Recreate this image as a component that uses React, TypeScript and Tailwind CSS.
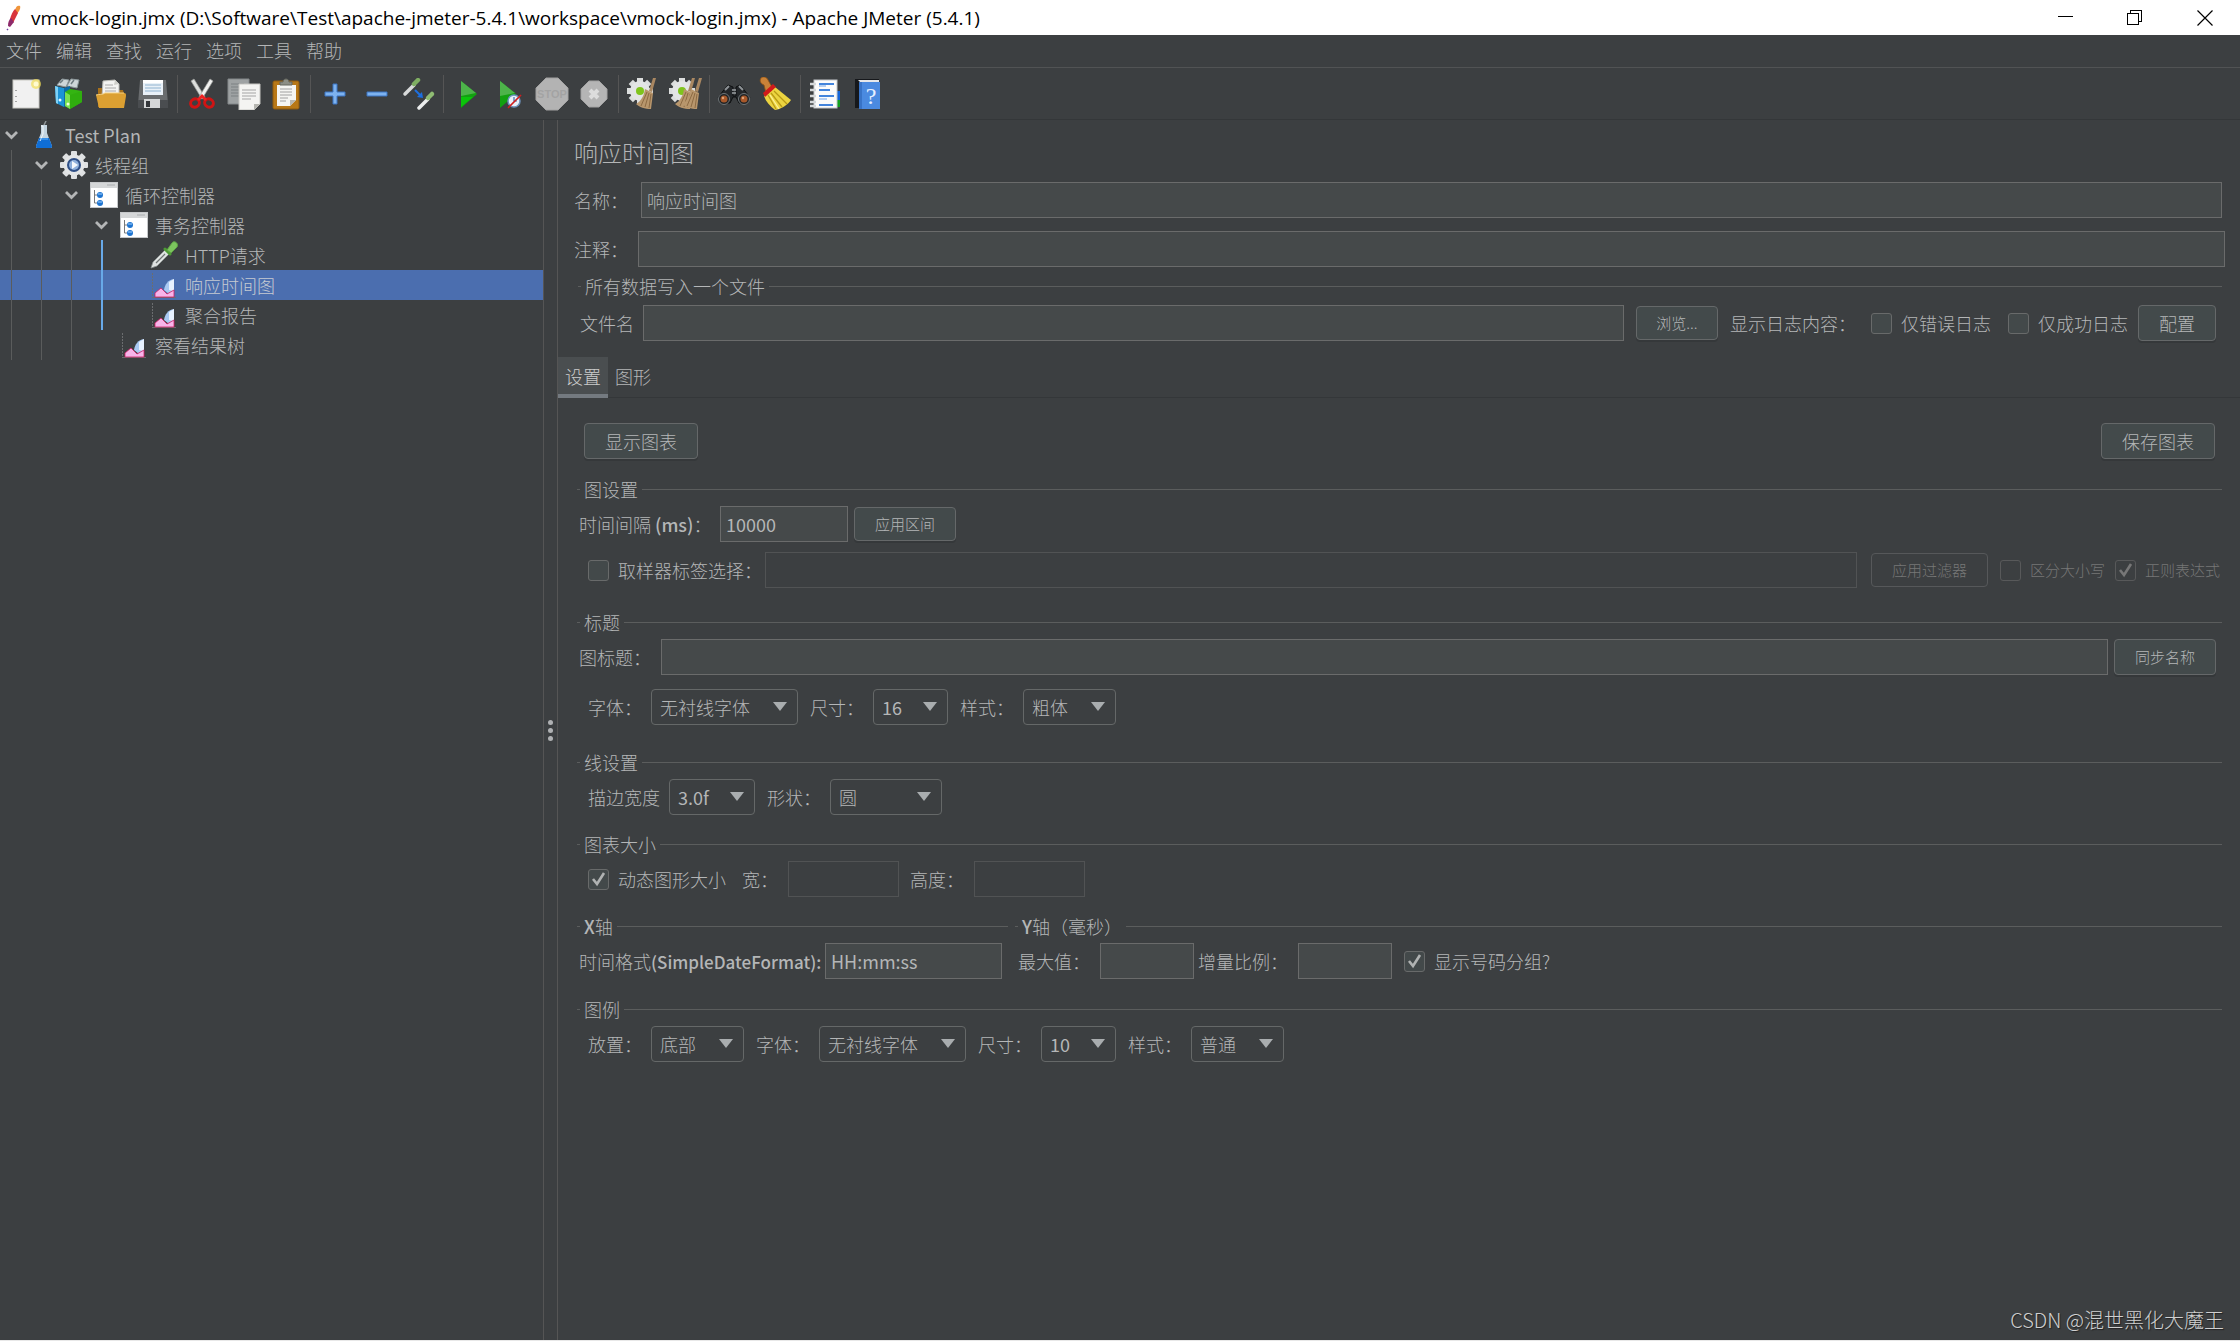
import { useState } from 'react';
import type { ReactNode } from 'react';

// ---------- toolbar icons ----------

const GEAR_TEETH = [0, 45, 90, 135, 180, 225, 270, 315];

function NewIcon() {
    return (
        <svg width="32" height="32" viewBox="0 0 32 32">
            <rect x="2" y="2" width="26" height="28" fill="#f1f1f1" stroke="#c9c9c4" />
            <path d="M5 12v1M5 18v1M5 23v1" stroke="#888" strokeWidth="1.5" />
            <circle cx="25" cy="6" r="5" fill="#f2de59" opacity=".7" />
            <circle cx="25" cy="6" r="2.5" fill="#fffbd0" />
        </svg>
    );
}

function TemplatesIcon() {
    return (
        <svg width="32" height="32" viewBox="0 0 32 32">
            <path d="M4 7l5-6 7 1-3 7zM14 8l4-7 8 1-2 8z" fill="#cfd6d8" stroke="#8e999c" />
            <path d="M7 5l3-3M18 6l3-4" stroke="#6f7b80" strokeWidth="1.5" />
            <path d="M2 8l9 2v19l-8-4z" fill="#1c93d6" />
            <path d="M2 8l3 1v17l-2-1z" fill="#7fd2f7" />
            <path d="M11 10l6-2v19l-6 2z" fill="#0d6aa6" />
            <circle cx="7" cy="22" r="1.5" fill="#e8f7ff" />
            <path d="M12 14l5-3 12 2v11l-12 7-5-3z" fill="#34b512" />
            <path d="M12 14l5 3v14l-5-3z" fill="#7be04f" />
            <path d="M17 17l12-4v11l-12 7z" fill="#2fae0e" />
            <circle cx="15" cy="26" r="1.5" fill="#eaffdf" />
        </svg>
    );
}

function OpenIcon() {
    return (
        <svg width="32" height="32" viewBox="0 0 32 32">
            <path d="M3 10h6l2 2h17l1 4v13H3z" fill="#a8711c" />
            <path d="M8 3l12-1 4 4v13H7z" fill="#f3f3f1" stroke="#bdbdb8" />
            <path d="M20 2l-1 5 5-1z" fill="#cfcfca" />
            <path d="M10 7h8M10 10h11M10 13h11" stroke="#aaa" />
            <path d="M1 17c3-1 7 0 9-2h19c2 0 2 1 2 3l-2 12H4z" fill="#dca032" />
            <path d="M1 17c3-1 7 0 9-2h19" stroke="#f4cf7c" fill="none" />
        </svg>
    );
}

function SaveIcon() {
    return (
        <svg width="32" height="32" viewBox="0 0 32 32">
            <path d="M3 2h26l2 24v4H1v-4z" fill="#696c6e" />
            <path d="M1 22h30v8H1z" fill="#4a4d50" />
            <rect x="6" y="2" width="20" height="15" fill="#e9f1f8" />
            <rect x="6" y="2" width="20" height="3" fill="#fff" />
            <path d="M8 7h16M8 10h16M8 13h16" stroke="#8fb2cf" />
            <rect x="7" y="21" width="16" height="9" fill="#d5d7d8" />
            <rect x="9" y="23" width="4" height="6" fill="#33363a" />
        </svg>
    );
}

function CutIcon() {
    return (
        <svg width="32" height="32" viewBox="0 0 32 32">
            <path d="M5 3l3-2 11 18-3 2z" fill="#dcdedc" stroke="#9a9c9a" strokeWidth=".7" />
            <path d="M27 3l-3-2-11 18 3 2z" fill="#f1f1f0" stroke="#9a9c9a" strokeWidth=".7" />
            <ellipse cx="9" cy="25" rx="4.5" ry="4" fill="none" stroke="#cf1414" strokeWidth="3" transform="rotate(-30 9 25)" />
            <ellipse cx="23" cy="25" rx="4.5" ry="4" fill="none" stroke="#cf1414" strokeWidth="3" transform="rotate(30 23 25)" />
            <path d="M12 22l4-4 4 4" fill="none" stroke="#e22" strokeWidth="3" />
        </svg>
    );
}

function CopyIcon() {
    return (
        <svg width="34" height="32" viewBox="0 0 34 32">
            <path d="M1 1h21v25H1z" fill="#9ea2a3" stroke="#83888a" />
            <path d="M4 6h13M4 9h13M4 12h8M4 15h8M4 18h8" stroke="#7c8183" />
            <path d="M12 6h21v20l-6 6H12z" fill="#f4f4f2" stroke="#c6c6c2" />
            <path d="M15 12h14M15 15h14M15 18h14M15 21h9" stroke="#a4a4a4" />
            <path d="M33 26h-6v6z" fill="#b5b5b0" />
        </svg>
    );
}

function PasteIcon() {
    return (
        <svg width="32" height="32" viewBox="0 0 32 32">
            <rect x="3" y="3" width="26" height="28" rx="1.5" fill="#b87817" stroke="#8f5a0c" />
            <path d="M7 7h19v15l-6 6H7z" fill="#f5f5f2" />
            <path d="M10 11h12M10 14h12M10 17h12M10 20h8M10 23h6" stroke="#a0a0a0" />
            <path d="M26 22h-6v6z" fill="#b7b7b2" />
            <path d="M10 7V4h3c0-4 6-4 6 0h3v3z" fill="#8d8f86" stroke="#666860" />
        </svg>
    );
}

function PlusIcon() {
    return (
        <svg width="32" height="32" viewBox="0 0 32 32">
            <path d="M14 6h4v8h8v4h-8v8h-4v-8H6v-4h8z" fill="#7db2ef" stroke="#3b74c4" />
        </svg>
    );
}

function MinusIcon() {
    return (
        <svg width="32" height="32" viewBox="0 0 32 32">
            <path d="M6 14h20v4H6z" fill="#7db2ef" stroke="#3b74c4" />
        </svg>
    );
}

function ToggleIcon() {
    return (
        <svg width="34" height="32" viewBox="0 0 34 32">
            <path d="M3 16l9-9" stroke="#d8dada" strokeWidth="3.5" strokeLinecap="round" />
            <path d="M12 6l4-4" stroke="#7fae62" strokeWidth="4.5" strokeLinecap="round" />
            <path d="M17 30l9-9" stroke="#eceeee" strokeWidth="3.5" strokeLinecap="round" />
            <path d="M26 20l4-4" stroke="#8fbc72" strokeWidth="4.5" strokeLinecap="round" />
            <path d="M13 12l6 6" stroke="#1d6fe0" strokeWidth="2" />
            <path d="M21 20l-6-1 5-5z" fill="#1d6fe0" />
        </svg>
    );
}

function PlayIcon() {
    return (
        <svg width="32" height="32" viewBox="0 0 32 32">
            <path d="M9 3l16 13L9 30z" fill="#12a010" />
            <path d="M9 3l15 12-15 3z" fill="#4db34a" />
            <path d="M9 19l12 0-12 10z" fill="#0bc40a" />
        </svg>
    );
}

function PlayNoPauseIcon() {
    return (
        <svg width="32" height="32" viewBox="0 0 32 32">
            <path d="M6 3l16 13L6 30z" fill="#12a010" />
            <path d="M6 3l15 12-15 3z" fill="#4db34a" />
            <circle cx="20" cy="23" r="6" fill="#e8f0f8" stroke="#6e93bd" strokeWidth="1.5" />
            <path d="M20 19v4h3" fill="none" stroke="#3d6fae" strokeWidth="1.2" />
            <path d="M14 30L27 17" stroke="#d01f1f" strokeWidth="1.6" />
        </svg>
    );
}

function StopIcon() {
    return (
        <svg width="34" height="34" viewBox="0 0 34 34" fontFamily="Liberation Sans, sans-serif">
            <path d="M11 1h12l10 10v12L23 33H11L1 23V11z" fill="#b3b3b3" stroke="#a2a2a2" />
            <text x="17" y="21" fontSize="11" fontWeight="bold" textAnchor="middle" fill="#a3a3a3">STOP</text>
        </svg>
    );
}

function ShutdownIcon() {
    return (
        <svg width="32" height="32" viewBox="0 0 32 32">
            <path d="M11 3h10l8 8v10l-8 8H11l-8-8V11z" fill="#b5b5b5" stroke="#a2a2a2" />
            <path d="M12 12l8 8M20 12l-8 8" stroke="#dcdcdc" strokeWidth="4" />
        </svg>
    );
}

function Broom({ x }: { x: number }) {
    return (
        <g transform={`translate(${x} 0)`}>
            <path d="M20 1l3 0-4 14-3-1z" fill="#a98761" />
            <path d="M12 12l8 4-2 16c-6 0-12-2-15-5 5-3 8-8 9-15z" fill="#b8966c" />
            <path d="M14 15L8 29M16 16l-4 14M18 17l-2 14" stroke="#8c6a43" strokeWidth="1" />
        </g>
    );
}

function ClearIcon({ all }: { all?: boolean }) {
    return (
        <svg width="36" height="34" viewBox="0 0 36 34">
            {GEAR_TEETH.map(a => (
                <rect key={a} x="12" y="1" width="6" height="7" fill="#dcdede" transform={`rotate(${a} 15 14)`} />
            ))}
            <circle cx="15" cy="14" r="10" fill="#e3e5e5" />
            <circle cx="15" cy="14" r="4" fill="#7fc41c" />
            <Broom x={all ? 5 : 8} />
            {all && <Broom x={12} />}
        </svg>
    );
}

function SearchIcon() {
    return (
        <svg width="34" height="32" viewBox="0 0 34 32">
            <path d="M6 13l5-6 5 2v9h3V9l4-2 5 6 5 7-5 5h-6l-3-6h-3l-3 6H6l-5-5z" fill="#24272a" stroke="#0d0f10" />
            <path d="M8 12l4-4M26 12l-4-4" stroke="#8d9295" strokeWidth="2" />
            <path d="M15 12h4M15 15h4" stroke="#9aa0a3" strokeWidth="1.5" />
            <circle cx="7" cy="21" r="5.5" fill="#202224" stroke="#6f7578" />
            <circle cx="27" cy="21" r="5.5" fill="#202224" stroke="#6f7578" />
            <circle cx="7" cy="21" r="3.5" fill="#a7582a" />
            <circle cx="27" cy="21" r="3.5" fill="#a7582a" />
            <circle cx="6" cy="20" r="1.2" fill="#e0a176" />
            <circle cx="26" cy="20" r="1.2" fill="#e0a176" />
        </svg>
    );
}

function ResetSearchIcon() {
    return (
        <svg width="34" height="34" viewBox="0 0 34 34">
            <path d="M2 1c2-2 6-1 7 2l4 7-6 6-2-8C2 7 0 4 2 1z" fill="#c98238" stroke="#8c5315" strokeWidth=".8" />
            <path d="M5 19L16 10l16 13c-3 5-10 9-16 10C11 29 7 25 5 19z" fill="#ecd440" />
            <path d="M9 18l8 14M12 16l11 14M15 14l13 13" stroke="#b89a14" strokeWidth="1.3" />
            <path d="M11 18l9 14" stroke="#fbf19a" strokeWidth="1.3" />
            <path d="M4 16L14 7l3 3L6 20z" fill="#d01a1a" />
        </svg>
    );
}

function FunctionHelperIcon() {
    return (
        <svg width="32" height="32" viewBox="0 0 32 32">
            <path d="M26 13h5v9h-5z" fill="#1565d8" />
            <path d="M26 22h5v7h-5z" fill="#12a01e" />
            <rect x="5" y="2" width="23" height="28" fill="#fbfbfb" stroke="#c4c8cb" />
            <path d="M1 6h6M1 12h6M1 18h6M1 24h6M1 28h6" stroke="#d3d6d8" strokeWidth="2.5" />
            <path d="M10 6h15M10 12h11M10 18h15M10 27h14" stroke="#4384dc" strokeWidth="1.8" />
            <path d="M10 8h7M10 21h8" stroke="#9fc1ef" strokeWidth="1.5" />
        </svg>
    );
}

function HelpIcon() {
    return (
        <svg width="32" height="32" viewBox="0 0 32 32" fontFamily="Liberation Serif, serif">
            <path d="M4 1h24v3H8v26H4z" fill="#16181b" />
            <path d="M7 2h21v2H9z" fill="#e6e8ea" />
            <rect x="8" y="4" width="21" height="27" fill="#4a8ae0" />
            <rect x="8" y="4" width="3" height="27" fill="#3873c6" />
            <text x="20" y="26" fontSize="24" textAnchor="middle" fill="#e6f0ff">?</text>
        </svg>
    );
}

const toolbarGroups: { label: string; icon: ReactNode; disabled?: boolean }[][] = [
    [
        { label: '新建', icon: <NewIcon /> },
        { label: '模板', icon: <TemplatesIcon /> },
        { label: '打开', icon: <OpenIcon /> },
        { label: '保存', icon: <SaveIcon /> },
    ],
    [
        { label: '剪切', icon: <CutIcon /> },
        { label: '复制', icon: <CopyIcon /> },
        { label: '粘贴', icon: <PasteIcon /> },
    ],
    [
        { label: '展开', icon: <PlusIcon /> },
        { label: '折叠', icon: <MinusIcon /> },
        { label: '切换', icon: <ToggleIcon /> },
    ],
    [
        { label: '启动', icon: <PlayIcon /> },
        { label: '不停顿开始', icon: <PlayNoPauseIcon /> },
        { label: '停止', icon: <StopIcon />, disabled: true },
        { label: '关闭', icon: <ShutdownIcon />, disabled: true },
    ],
    [
        { label: '清除', icon: <ClearIcon /> },
        { label: '清除全部', icon: <ClearIcon all /> },
    ],
    [
        { label: '搜索', icon: <SearchIcon /> },
        { label: '重置搜索', icon: <ResetSearchIcon /> },
    ],
    [
        { label: '函数助手', icon: <FunctionHelperIcon /> },
        { label: '帮助', icon: <HelpIcon /> },
    ],
];

// ---------- tree ----------

function FlaskIcon() {
    return (
        <svg width="28" height="28" viewBox="0 0 28 28">
            <path d="M14 4l2-4" stroke="#8f9698" strokeWidth="1.5" />
            <path d="M11 4h6v8l5 13c0 2-1 2-2 2H8c-1 0-2 0-2-2l5-13z" fill="#c3d4e0" />
            <path d="M9 17h10l3 8c0 2-1 2-2 2H8c-1 0-2 0-2-2z" fill="#0f6ed6" />
            <path d="M11 5h2v8l-3 7" stroke="#f4f8fb" fill="none" />
            <path d="M10 18h8" stroke="#5fb2ff" />
        </svg>
    );
}

function ThreadGroupIcon() {
    return (
        <svg width="28" height="28" viewBox="0 0 28 28">
            {GEAR_TEETH.map(a => (
                <rect key={a} x="11" y="0" width="6" height="7" rx="1" fill="#dfe1e2" transform={`rotate(${a} 14 14)`} />
            ))}
            <circle cx="14" cy="14" r="10.5" fill="#e4e6e7" />
            <circle cx="14" cy="14" r="7" fill="#2f4f86" />
            <circle cx="14" cy="14" r="5" fill="#8fb0dc" />
            <path d="M12 10l6 4-6 4z" fill="#f5f8fc" />
        </svg>
    );
}

function ControllerIcon() {
    return (
        <svg width="28" height="28" viewBox="0 0 28 28">
            <rect x="0.5" y="1.5" width="27" height="25" fill="#fff" stroke="#c6c8ca" />
            <rect x="1" y="2" width="26" height="5" fill="#d5d7d8" />
            <path d="M17 4h8" stroke="#a9acae" />
            <path d="M4.500 9v13H7M4.500 14H7" stroke="#77797b" fill="none" />
            <circle cx="10" cy="14" r="3" fill="#1e74d0" />
            <circle cx="10" cy="22" r="3" fill="#1e74d0" />
            <path d="M8 13h4M8 21h4" stroke="#9fd0ff" />
        </svg>
    );
}

function SamplerIcon() {
    return (
        <svg width="28" height="28" viewBox="0 0 28 28">
            <path d="M1 27l2-6L15 9l4 4L7 25z" fill="#dfe3e2" stroke="#8d9392" strokeWidth=".8" />
            <path d="M6 22l9-9" stroke="#6f7574" strokeWidth="1.2" />
            <path d="M15 8l5 5" stroke="#4c9a34" strokeWidth="3" strokeLinecap="round" />
            <path d="M17 9l5-7c2-3 7 0 5 4l-6 6z" fill="#7cc45e" stroke="#5fa346" />
        </svg>
    );
}

function GraphIcon() {
    return (
        <svg width="28" height="28" viewBox="0 0 28 28">
            <path d="M2.500 2v24" stroke="#6b6d6f" strokeDasharray="2 1" />
            <path d="M2 26.500h24" stroke="#6b6d6f" />
            <path d="M14 19c1-6 4-10 10-11v16l-5-1z" fill="#a8c8f2" />
            <path d="M19 11l5-3v12l-5-1z" fill="#e7f1ff" />
            <path d="M5 22l6-5 6 6 7-4v7H5z" fill="#f7b4ea" stroke="#d21d63" strokeWidth=".8" />
        </svg>
    );
}

interface TreeNode {
    id: string;
    name: string;
    depth: number;
    icon: ReactNode;
    open?: boolean;
}

const treeNodes: TreeNode[] = [
    { id: 'plan', name: 'Test Plan', depth: 0, icon: <FlaskIcon />, open: true },
    { id: 'threads', name: '线程组', depth: 1, icon: <ThreadGroupIcon />, open: true },
    { id: 'loop', name: '循环控制器', depth: 2, icon: <ControllerIcon />, open: true },
    { id: 'tx', name: '事务控制器', depth: 3, icon: <ControllerIcon />, open: true },
    { id: 'http', name: 'HTTP请求', depth: 4, icon: <SamplerIcon /> },
    { id: 'rt', name: '响应时间图', depth: 4, icon: <GraphIcon /> },
    { id: 'agg', name: '聚合报告', depth: 4, icon: <GraphIcon /> },
    { id: 'results', name: '察看结果树', depth: 3, icon: <GraphIcon /> },
];

function Tree() {
    const [selected, setSelected] = useState('rt');

    return (
        <nav className="w-[544px] shrink-0 border-r border-[#555555]">
            {treeNodes.map(node => (
                <button
                    key={node.id}
                    onClick={() => setSelected(node.id)}
                    className={`flex h-[30px] w-full items-center ${node.id === selected ? 'bg-[#4b6eaf] text-[#c6cad2]' : ''}`}
                >
                    {/* indent guides */}
                    {Array.from({ length: node.depth }, (_, i) => (
                        <span key={i} className="h-full w-[30px] shrink-0 pl-[11px]">
                            <span className={`block h-full ${i === 3 ? 'w-0.5 bg-[#68a9e8]' : 'w-px bg-[#5a5c5c]'}`} />
                        </span>
                    ))}
                    <span className="flex w-[30px] shrink-0 pl-1">
                        {node.open && (
                            <svg width="15" height="10" viewBox="0 0 15 10">
                                <path d="M2 2l5.500 5.500L13 2" fill="none" stroke="#b4b6b7" strokeWidth="2.800" />
                            </svg>
                        )}
                    </span>
                    {node.icon}
                    <span className={`ml-[7px] ${node.depth === 0 ? 'font-normal' : ''}`}>{node.name}</span>
                </button>
            ))}
        </nav>
    );
}

// ---------- form parts ----------

function Field({ id, defaultValue, disabled, className }: { id: string; defaultValue?: string; disabled?: boolean; className: string }) {
    return (
        <input
            id={id}
            type="text"
            defaultValue={defaultValue}
            disabled={disabled}
            className={`h-9 min-w-0 border px-[5px] outline-none ${disabled ? 'border-[#515354] bg-transparent' : 'border-[#6a6b6b] bg-[#45494a]'} ${className}`}
        />
    );
}

function Btn({ children, small, disabled, className }: { children: ReactNode; small?: boolean; disabled?: boolean; className: string }) {
    return (
        <button
            disabled={disabled}
            className={`shrink-0 rounded border ${small ? 'h-[34px] text-[15px]' : 'h-9'} ${disabled ? 'border-[#56585a] text-[#777777]' : 'border-[#656869] bg-[#434a4b] shadow-[0_2px_0_#35383a]'} ${className}`}
        >
            {children}
        </button>
    );
}

function Check({ children, checked, small, disabled }: { children: ReactNode; checked?: boolean; small?: boolean; disabled?: boolean }) {
    return (
        <label className={`flex shrink-0 items-center ${small ? 'text-[15px]' : ''} ${disabled ? 'text-[#777777]' : ''}`}>
            <span className="relative flex">
                <input
                    type="checkbox"
                    defaultChecked={checked}
                    disabled={disabled}
                    className={`peer size-[21px] appearance-none rounded-[3px] border ${disabled ? 'border-[#58595a]' : 'border-[#686a6a] bg-[#43494a]'}`}
                />
                <svg viewBox="0 0 21 21" className="pointer-events-none absolute inset-0 hidden size-[21px] peer-checked:block">
                    <path d="M5 10l4 5 7-11" fill="none" stroke={disabled ? '#777777' : '#b0b2b2'} strokeWidth="2.600" />
                </svg>
            </span>
            <span className="ml-[9px]">{children}</span>
        </label>
    );
}

function Combo({ label, value, options, className }: { label: string; value: string; options: string[]; className: string }) {
    return (
        <label className="flex items-center gap-[9px]">
            {label}
            <span className="relative flex">
                <select
                    defaultValue={value}
                    className={`h-9 appearance-none rounded border border-[#656868] bg-transparent pl-2 outline-none ${className}`}
                >
                    {options.map(o => <option key={o}>{o}</option>)}
                </select>
                <svg width="14" height="9" viewBox="0 0 14 9" className="pointer-events-none absolute right-[11px] top-[13px]">
                    <path d="M0 0h14L7 9z" fill="#a9adaf" />
                </svg>
            </span>
        </label>
    );
}

function Legend({ children }: { children: ReactNode }) {
    return (
        <h2 className="flex h-[34px] items-center gap-1 pl-1 pr-[3px]">
            <span className="h-px w-[3px] bg-[#5b5d5d]" />
            {children}
            <span className="h-px flex-1 bg-[#5b5d5d]" />
        </h2>
    );
}

const fonts = ['无衬线字体', '衬线字体', '等宽字体'];
const sizes = ['8', '10', '12', '14', '16', '18', '20'];
const styles = ['普通', '粗体', '斜体'];

function SettingsTab() {
    return (
        <div className="pl-[15px] pr-[15px] pt-[25px]">
            <div className="flex justify-between pl-[11px] pr-2.5">
                <Btn className="w-[114px]">显示图表</Btn>
                <Btn className="w-[114px]">保存图表</Btn>
            </div>

            <section className="mt-[13px]">
                <Legend>图设置</Legend>
                <div className="flex items-center pl-1.5">
                    <label htmlFor="interval" className="w-[141px]">时间间隔 <b className="font-medium">(ms)</b>：</label>
                    <Field id="interval" defaultValue="10000" className="w-32 font-normal" />
                    <Btn small className="ml-1.5 w-[102px]">应用区间</Btn>
                </div>
                <div className="mt-2.5 flex items-center pl-[15px]">
                    <Check>取样器标签选择：</Check>
                    <Field id="sampler-label" disabled className="ml-[3px] flex-1" />
                    <Btn small disabled className="ml-3.5 w-[117px]">应用过滤器</Btn>
                    <div className="ml-3 mr-[5px] flex gap-2.5">
                        <Check small disabled>区分大小写</Check>
                        <Check small disabled checked>正则表达式</Check>
                    </div>
                </div>
            </section>

            <section className="mt-[17px]">
                <Legend>标题</Legend>
                <div className="flex items-center pl-1.5 pr-[9px]">
                    <label htmlFor="graph-title" className="w-[82px]">图标题：</label>
                    <Field id="graph-title" className="flex-1" />
                    <Btn className="ml-1.5 w-[102px] text-[15px]">同步名称</Btn>
                </div>
                <div className="mt-3.5 flex gap-3 pl-[15px]">
                    <Combo label="字体：" value="无衬线字体" options={fonts} className="w-[147px]" />
                    <Combo label="尺寸：" value="16" options={sizes} className="w-[75px] font-normal" />
                    <Combo label="样式：" value="粗体" options={styles} className="w-[93px]" />
                </div>
            </section>

            <section className="mt-5">
                <Legend>线设置</Legend>
                <div className="flex gap-3 pl-[15px]">
                    <Combo label="描边宽度" value="3.0f" options={['1.0f', '2.0f', '3.0f', '4.0f']} className="w-[86px] font-normal" />
                    <Combo label="形状：" value="圆" options={['圆', '菱形', '无']} className="w-28" />
                </div>
            </section>

            <section className="mt-3">
                <Legend>图表大小</Legend>
                <div className="flex items-center pl-[15px]">
                    <Check checked>动态图形大小</Check>
                    <label htmlFor="graph-width" className="ml-4 w-[46px]">宽：</label>
                    <Field id="graph-width" disabled className="w-[111px]" />
                    <label htmlFor="graph-height" className="ml-[11px] w-16">高度：</label>
                    <Field id="graph-height" disabled className="w-[111px]" />
                </div>
            </section>

            <div className="mt-3 flex">
                <section className="w-[438px]">
                    <Legend><span><b className="font-medium">X</b>轴</span></Legend>
                    <div className="flex items-center pl-1.5">
                        <label htmlFor="time-format" className="w-[246px] whitespace-nowrap">
                            时间格式<b className="text-[17px] font-medium">(SimpleDateFormat):</b>
                        </label>
                        <Field id="time-format" defaultValue="HH:mm:ss" className="w-[177px] font-normal" />
                    </div>
                </section>
                <section className="flex-1">
                    <Legend><span><b className="font-medium">Y</b>轴（毫秒）</span></Legend>
                    <div className="flex items-center pl-[7px]">
                        <label htmlFor="max-value" className="w-[82px]">最大值：</label>
                        <Field id="max-value" className="w-[94px]" />
                        <label htmlFor="increment" className="ml-1 w-[100px]">增量比例：</label>
                        <Field id="increment" className="mr-3 w-[94px]" />
                        <Check checked>显示号码分组?</Check>
                    </div>
                </section>
            </div>

            <section className="mt-[13px]">
                <Legend>图例</Legend>
                <div className="flex gap-3 pl-[15px]">
                    <Combo label="放置：" value="底部" options={['底部', '右边', '左边', '顶部']} className="w-[93px]" />
                    <Combo label="字体：" value="无衬线字体" options={fonts} className="w-[147px]" />
                    <Combo label="尺寸：" value="10" options={sizes} className="w-[75px] font-normal" />
                    <Combo label="样式：" value="普通" options={styles} className="w-[93px]" />
                </div>
            </section>
        </div>
    );
}

const menus = ['文件', '编辑', '查找', '运行', '选项', '工具', '帮助'];
const tabs = ['设置', '图形'];

export default function App() {
    const [tab, setTab] = useState('设置');

    return (
        <div className="relative flex min-h-screen flex-col border-b border-[#e8e8e8] bg-[#3c3f41] font-['Noto_Sans_CJK_SC',sans-serif] text-[18px] leading-6 font-light text-[#b4b6b7]">
            {/* Window title */}
            <header className="flex h-[35px] items-center bg-white pl-1 font-['Open_Sans','Noto_Sans_CJK_SC',sans-serif] font-normal text-black">
                <svg width="18" height="28" viewBox="0 0 18 28">
                    <path d="M11 6c1-4 3-5 5-4 1 2-1 6-4 9z" fill="#f0953a" />
                    <path d="M6 15c1-4 3-8 5-10l3 4-5 10z" fill="#d8343a" />
                    <path d="M4 22c0-4 1-6 3-8l3 4-4 5z" fill="#8d2a6b" />
                    <path d="M3 25l1 1" stroke="#6a3fa0" strokeWidth="1.500" />
                </svg>
                <h1 className="ml-[9px] flex-1 text-[19px]">vmock-login.jmx (D:\Software\Test\apache-jmeter-5.4.1\workspace\vmock-login.jmx) - Apache JMeter (5.4.1)</h1>
                <button aria-label="最小化" className="flex h-full w-[70px] items-center justify-center">
                    <svg width="15" height="15" shapeRendering="crispEdges"><path d="M0 6.500h15" stroke="#000" /></svg>
                </button>
                <button aria-label="还原" className="flex h-full w-[70px] items-center justify-center">
                    <svg width="16" height="16" fill="none" stroke="#000" shapeRendering="crispEdges">
                        <path d="M0.500 3.500h11v11h-11zM3.500 3.500v-3h11v11h-3" />
                    </svg>
                </button>
                <button aria-label="关闭" className="flex h-full w-[70px] items-center justify-center">
                    <svg width="16" height="16" stroke="#000" strokeWidth="1.200"><path d="M0.500 0.500l15 15M15.500 0.500l-15 15" /></svg>
                </button>
            </header>

            <nav className="flex h-[33px] items-center gap-3.5 border-b border-[#515354] pb-0.5 pl-1.5">
                {menus.map(m => <button key={m}>{m}</button>)}
            </nav>

            {/* Toolbar */}
            <div className="flex h-[52px] items-center border-b border-[#343739] pl-1.5">
                {toolbarGroups.map((group, i) => (
                    <div key={i} className="flex items-center">
                        {i > 0 && <span className="mx-[3px] h-[38px] w-px bg-[#555555]" />}
                        {group.map(b => (
                            <button key={b.label} aria-label={b.label} disabled={b.disabled} className="flex h-[42px] w-[42px] items-center justify-center">
                                {b.icon}
                            </button>
                        ))}
                    </div>
                ))}
            </div>

            <div className="flex flex-1">
                <Tree />
                <div className="flex w-[13px] shrink-0 flex-col items-center justify-center gap-[3px]">
                    <span className="size-[5px] rounded-full bg-[#afb1b3]" />
                    <span className="size-[5px] rounded-full bg-[#afb1b3]" />
                    <span className="size-[5px] rounded-full bg-[#afb1b3]" />
                </div>

                <main className="min-w-0 flex-1 border-l border-[#555555]">
                    <h1 className="pl-4 pt-4 text-[24px] leading-8">响应时间图</h1>
                    <div className="mt-3.5 flex items-center pl-4 pr-[18px]">
                        <label htmlFor="name" className="w-[67px]">名称：</label>
                        <Field id="name" defaultValue="响应时间图" className="flex-1" />
                    </div>
                    <div className="mt-[13px] flex items-center pl-4 pr-[15px]">
                        <label htmlFor="comment" className="w-16">注释：</label>
                        <Field id="comment" className="flex-1" />
                    </div>

                    <section className="pl-4 pr-[15px] pt-0.5">
                        <Legend>所有数据写入一个文件</Legend>
                        <div className="mt-0.5 flex items-center pl-1.5 pr-[9px]">
                            <label htmlFor="filename" className="w-[63px]">文件名</label>
                            <Field id="filename" className="flex-1" />
                            <Btn small className="ml-3 w-[82px]">浏览...</Btn>
                            <span className="ml-3 mr-[15px]">显示日志内容：</span>
                            <Check>仅错误日志</Check>
                            <span className="w-[17px]" />
                            <Check>仅成功日志</Check>
                            <Btn className="ml-2.5 w-[78px]">配置</Btn>
                        </div>
                    </section>

                    <div role="tablist" className="mt-4 flex h-[41px] border-b border-[#343739]">
                        {tabs.map(t => (
                            <button
                                key={t}
                                role="tab"
                                aria-selected={t === tab}
                                onClick={() => setTab(t)}
                                className={`h-[41px] w-[50px] border-b-4 ${t === tab ? 'border-[#747a80] bg-[#4a4e50] text-[#cccccc]' : 'border-transparent'}`}
                            >
                                {t}
                            </button>
                        ))}
                    </div>
                    {tab === '设置' && <SettingsTab />}
                </main>
            </div>

            <p className="absolute right-4 bottom-1.5 text-[20px] leading-7 text-[#d0d0d0] [text-shadow:1px_1px_1px_#222222]">CSDN @混世黑化大魔王</p>
        </div>
    );
}
